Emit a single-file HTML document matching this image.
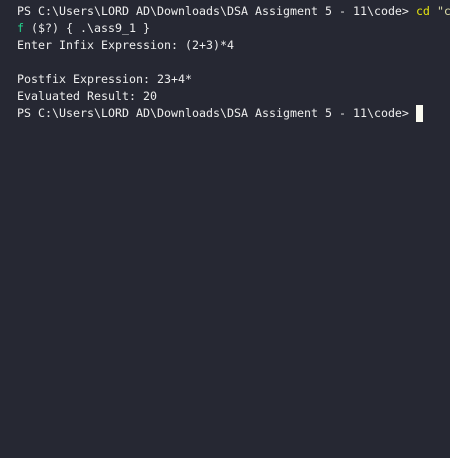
<!DOCTYPE html>
<html><head><style>
html,body{margin:0;width:450px;height:458px;background:#262833;overflow:hidden}
pre{margin:0;position:absolute;left:17px;top:3px;font-family:"DejaVu Sans Mono","Liberation Mono",monospace;font-size:11.63px;line-height:17px;color:#eeeeee;white-space:pre}
.y{color:#e5e510}.g{color:#23d18b}.s{color:#dcdcaa}
.c{display:inline-block;width:7px;height:17px;background:#fafaf0;vertical-align:top;margin-left:7px}
</style></head><body>
<pre>PS C:\Users\LORD AD\Downloads\DSA Assigment 5 - 11\code&gt; <span class="y">cd</span> <span class="s">"c</span>
<span class="g">f</span> ($?) { .\ass9_1 }
Enter Infix Expression: (2+3)*4

Postfix Expression: 23+4*
Evaluated Result: 20
PS C:\Users\LORD AD\Downloads\DSA Assigment 5 - 11\code&gt;<span class="c"></span></pre>
</body></html>
